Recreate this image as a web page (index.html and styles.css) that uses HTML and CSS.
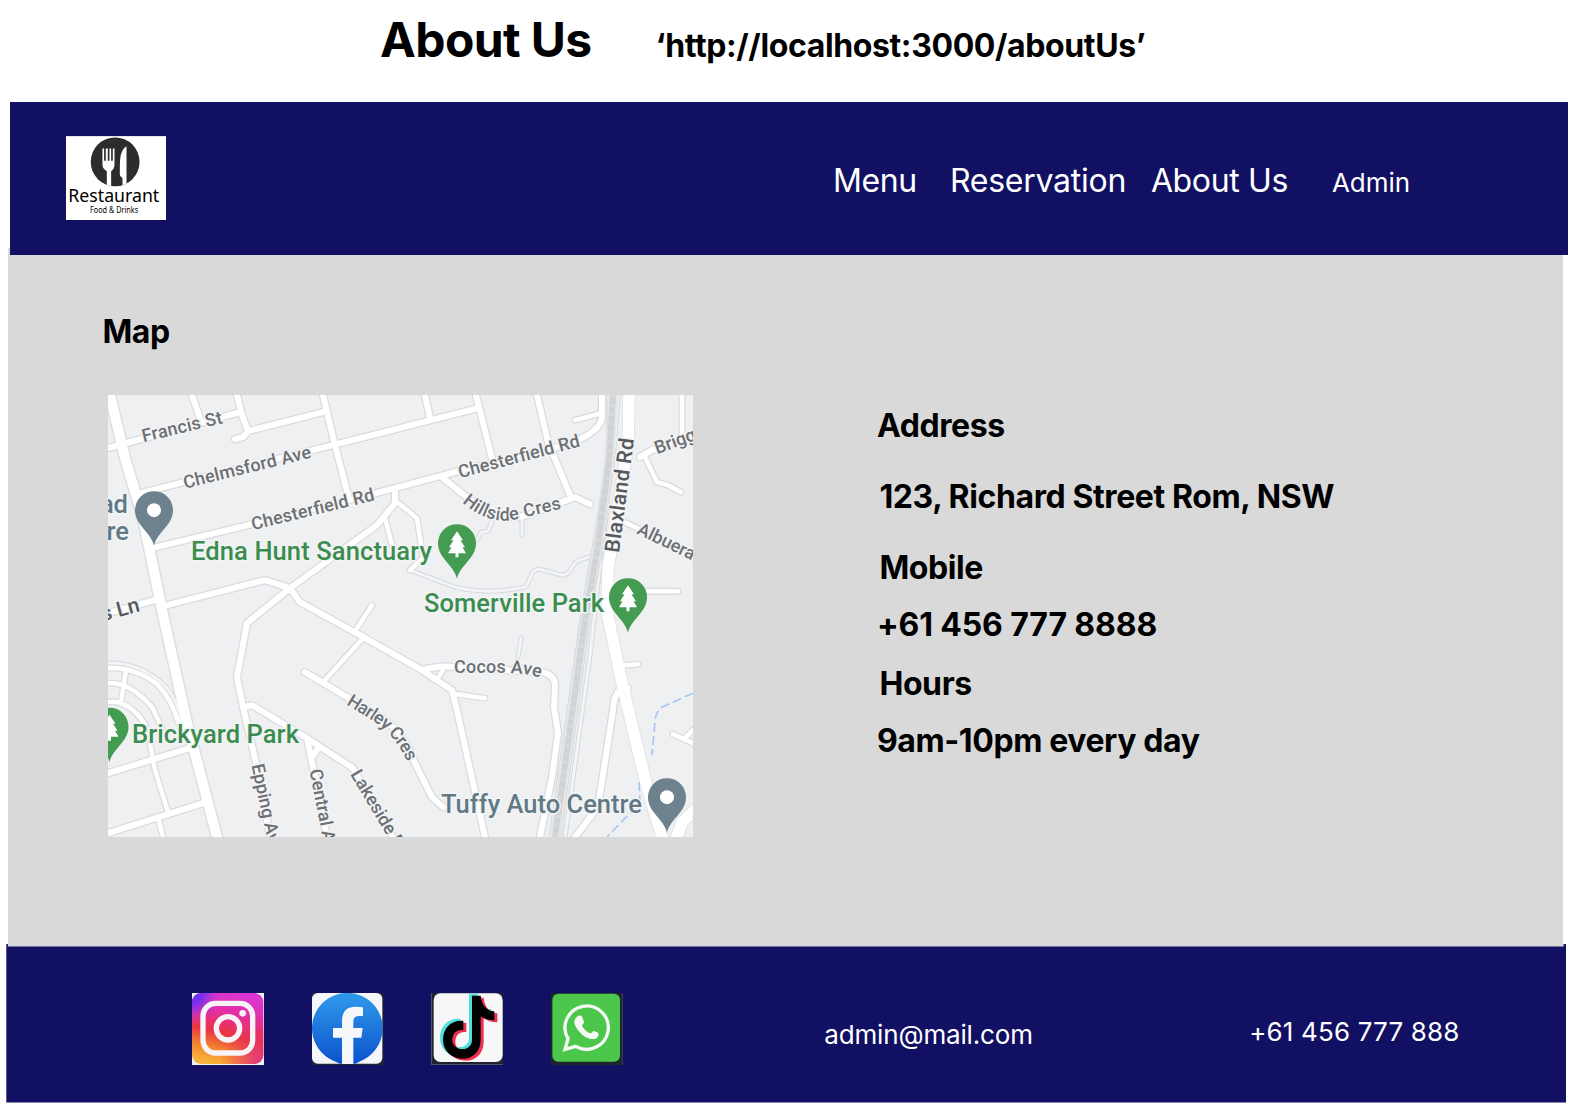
FILE: index.html
```html
<!DOCTYPE html>
<html lang="en">
<head>
<meta charset="utf-8">
<title>About Us</title>
<link rel="stylesheet" href="styles.css">
</head>
<body>
<div class="caption">
  <h1 class="caption-title">About Us</h1>
  <p class="caption-url">‘http://localhost:3000/aboutUs’</p>
</div>

<header class="site-header">
  <svg class="logo" viewBox="0 0 300 252" role="img" aria-label="Restaurant">
    <rect width="300" height="252" fill="#fff"/>
    <clipPath id="plate"><circle cx="147" cy="77" r="73"/></clipPath>
    <circle cx="147" cy="77" r="73" fill="#2c2c2c"/>
    <g fill="#fff" clip-path="url(#plate)">
      <path d="M109 37h5v37h5V37h6v37h5V37h5v37h5V37h5v48c0 11-4 15-10 20v50h-13v-50c-7-5-13-9-13-20z"/>
      <path d="M181 30v125h-12v-30c-5-3-9-7-8-15 1-35-3-65 20-80z"/>
    </g>
    <text class="logo-name" x="7" y="198" textLength="272" lengthAdjust="spacingAndGlyphs">Restaurant</text>
    <text class="logo-tag" x="72" y="231" textLength="144" lengthAdjust="spacingAndGlyphs">Food &amp; Drinks</text>
  </svg>
  <nav class="nav">
    <a class="nav-menu">Menu</a>
    <a class="nav-reservation">Reservation</a>
    <a class="nav-about">About Us</a>
    <a class="nav-admin">Admin</a>
  </nav>
</header>

<main class="content">
  <section class="map-section">
    <h2 class="line">Map</h2>
    <svg class="map" viewBox="108 395 585 442" role="img" aria-label="Street map">
      <defs>
        <g id="trails">
          <path d="M410 570L455 587Q488 595 525 587C531 582 530 569 539 569L562 575C572 576 571 560 582 559L597 555"/>
          <path d="M492 522L488 531 481 532 477 540M522 515V535M521 638L518 657"/>
          <path d="M108 663Q136 662 160 681Q178 697 181 722"/>
          <path d="M607 510L601 555 590 655 565 837"/>
        </g>
        <g id="lanes">
          <path d="M395 500L417 518 423 558 410 570M385 518L392 545"/>
          <path d="M108 668Q135 667 157 684Q172 699 178 722M108 683Q130 682 152 707L162 728M108 702Q128 699 145 724M126 670L121 702"/>
          <path d="M150 743L155 770 168 812M158 817L163 837"/>
          <path d="M372 605L357 628M363 638L323 682M457 694L485 698M443 670L438 678"/>
          <path d="M645 457L657 482 668 485 681 492M682 395V440M625 665L638 664M648 591H678M673 734L693 743M685 738L693 730"/>
          <path d="M625 522L645 532 693 558M575 420L602 413"/>
        </g>
        <g id="streets">
          <path d="M108 448L240 412M192 395L200 418M237 395L242 415 248 431 243 437 235 439M248 431L323 412"/>
          <path d="M137 494L180 483 333 445 478 408M323 395L333 437 348 495M425 395L430 418M476 395L493 462"/>
          <path d="M152 548L240 527 380 492 455 472 565 445Q603 432 602 415V395M537 395L548 442 570 495"/>
          <path d="M443 478L468 498Q500 524 530 514L575 497 590 504"/>
          <path d="M395 488V503L377 525 290 588 247 623 237 677 243 707 257 767 270 837"/>
          <path d="M167 605L265 580 290 588 300 602 360 635 422 670 452 690 457 710 485 837M108 613L155 600"/>
          <path d="M305 672L347 697 385 720Q405 735 415 763L432 797 443 807"/>
          <path d="M422 670Q440 665 455 667L542 672Q556 675 555 687L554 707 558 733 552 777 540 837"/>
          <path d="M108 773L193 747M108 833L203 803"/>
          <path d="M243 707L252 705 307 738 353 768 393 837M307 738L313 767 327 837M319 747L311 758"/>
          <path d="M628 688Q614 687 613 710L598 807 575 837M640 457L652 450 693 435"/>
        </g>
      </defs>
      <rect x="108" y="395" width="585" height="442" fill="#eff0f2"/>
      <use href="#trails" class="road c-trail"/>
      <use href="#lanes" class="road c-lane"/>
      <use href="#streets" class="road c-street"/>
      <path class="road c-main" d="M110 395L125 458 143 518 162 610 187 723 217 837"/>
      <path class="road c-main" d="M629 395L628 445 608 568 607 612 622 683 647 787 662 837M675 842L682 822 695 810"/>
      <use href="#trails" class="road f-trail"/>
      <use href="#lanes" class="road f-lane"/>
      <use href="#streets" class="road f-street"/>
      <path class="rail-bed" d="M613 395L609 460 598 545 585 620 555 837"/>
      <path class="rail" d="M613 395L609 460 598 545 585 620 555 837"/>
      <path class="rail-ties" d="M613 395L609 460 598 545 585 620 555 837"/>
      <path class="rail-side" d="M607 395V430M620 395L616 450 603 545 590 620 561 837M604 480L582 605 549 837"/>
      <path class="road f-main" d="M110 395L125 458 143 518 162 610 187 723 217 837"/>
      <path class="road f-main wide" d="M629 395L628 445 608 568 607 612 622 683 647 787 662 837M675 842L682 822 695 810"/>
      <path class="creek" d="M693 693L662 707Q655 712 655 722L652 755M639 782L640 803Q634 812 626 817L607 837"/>

      <g class="label">
        <text transform="translate(143.500 442) rotate(-13.500)" textLength="82">Francis St</text>
        <text transform="translate(185 488.500) rotate(-13.800)" textLength="131">Chelmsford Ave</text>
        <text transform="translate(253 530) rotate(-13.800)" textLength="126">Chesterfield Rd</text>
        <text transform="translate(460 478) rotate(-14.800)" textLength="125">Chesterfield Rd</text>
        <path id="p-hill" fill="none" d="M462 502Q489 526 517 519L568 507"/>
        <text><textPath href="#p-hill" textLength="106">Hillside Cres</textPath></text>
        <text transform="translate(657 454) rotate(-20)">Briggs</text>
        <text transform="translate(636 533) rotate(26)">Albuera</text>
        <path id="p-cocos" fill="none" d="M454 673H510Q526 673 545 679"/>
        <text><textPath href="#p-cocos" textLength="87">Cocos Ave</textPath></text>
        <path id="p-harley" fill="none" d="M346 704L372 720Q397 735 410 768"/>
        <text><textPath href="#p-harley" textLength="86">Harley Cres</textPath></text>
        <text transform="translate(251.500 765) rotate(78)">Epping Ave</text>
        <text transform="translate(309.500 770) rotate(79)">Central Ave</text>
        <text transform="translate(350 774) rotate(59)">Lakeside Dr</text>
        <text class="major" transform="translate(619 553) rotate(-82.500)" textLength="115">Blaxland Rd</text>
        <text class="major" transform="translate(103 621) rotate(-15)">s Ln</text>
      </g>
      <g class="place park">
        <text x="191" y="560" textLength="241">Edna Hunt Sanctuary</text>
        <text x="424" y="612" textLength="180">Somerville Park</text>
        <text x="132" y="743" textLength="167">Brickyard Park</text>
      </g>
      <g class="place shop">
        <text x="441" y="812.500" textLength="201">Tuffy Auto Centre</text>
        <text x="128" y="513" text-anchor="end">ad</text>
        <text x="129" y="539.500" text-anchor="end">re</text>
      </g>
      <defs>
        <path id="pin" d="M0 35.500C-3 22-19 15-19 0A19 19 0 0 1 19 0C19 15 3 22 0 35.500Z"/>
        <path id="tree" fill="#fff" d="M0-12L6-3H3.500L8 4H5.500L9 10H1.500V14H-1.500V10H-9L-5.500 4H-8L-3.500-3H-6Z"/>
      </defs>
      <g transform="translate(154 510)"><use href="#pin" fill="#6d828e"/><circle r="7" fill="#fff"/></g>
      <g transform="translate(667 797)"><use href="#pin" fill="#6d828e"/><circle r="7" fill="#fff"/></g>
      <g transform="translate(457 543)"><use href="#pin" fill="#449b52"/><use href="#tree"/></g>
      <g transform="translate(628 597)"><use href="#pin" fill="#449b52"/><use href="#tree"/></g>
      <g transform="translate(109.500 726.500)"><use href="#pin" fill="#449b52"/><use href="#tree"/></g>
    </svg>
  </section>
  <section class="info">
    <h2 class="line address">Address</h2>
    <p class="line street indent">123, Richard Street Rom, NSW</p>
    <h2 class="line mobile indent">Mobile</h2>
    <p class="line phone">+61 456 777 8888</p>
    <h2 class="line hours indent">Hours</h2>
    <p class="line open">9am-10pm every day</p>
  </section>
</main>

<footer class="site-footer">
  <div class="social">
    <svg viewBox="0 0 216 216" role="img" aria-label="Instagram">
      <defs>
        <linearGradient id="ig" x1=".35" y1="1" x2=".6" y2="0">
          <stop offset="0" stop-color="#f6b23a"/><stop offset=".2" stop-color="#f3862f"/><stop offset=".42" stop-color="#ea3440"/><stop offset=".72" stop-color="#e42fa0"/><stop offset="1" stop-color="#d936d4"/>
        </linearGradient>
        <radialGradient id="ig-blue" cx="0" cy="0" r=".45"><stop offset="0" stop-color="#5a2cf0"/><stop offset=".35" stop-color="#7a30ee"/><stop offset="1" stop-color="#d936d4" stop-opacity="0"/></radialGradient>
        <radialGradient id="ig-pink" cx="1" cy="1" r=".6"><stop offset="0" stop-color="#e02a90"/><stop offset="1" stop-color="#e82c60" stop-opacity="0"/></radialGradient>
      </defs>
      <rect width="216" height="216" fill="#f1eff6"/>
      <rect width="214" height="213" rx="27" fill="url(#ig)"/>
      <rect width="214" height="213" rx="27" fill="url(#ig-blue)"/>
      <rect width="214" height="213" rx="27" fill="url(#ig-pink)"/>
      <g fill="none" stroke="#f7f3f7" stroke-width="16"><rect x="33" y="31" width="149" height="149" rx="38"/><circle cx="108" cy="106" r="35"/></g>
      <circle cx="152" cy="61" r="10" fill="#f7f3f7"/>
    </svg>
    <svg viewBox="0 0 216 216" role="img" aria-label="Facebook">
      <defs><linearGradient id="fb" x2="0" y2="1"><stop stop-color="#309aea"/><stop offset="1" stop-color="#0c53cd"/></linearGradient></defs>
      <rect width="214" height="216" fill="#1f2430"/>
      <rect width="211" height="212" rx="17" fill="#f4f6f9"/>
      <path fill="url(#fb)" d="M64 203A106 106 0 1 1 148 203L130 212H84Z"/>
      <path fill="#f5f7fa" d="M90 213V134H63V105H90V84Q90 41 131 41Q143 41 153 43V69H140Q124 69 124 86V105H152L148 134H124V213Z"/>
    </svg>
    <svg viewBox="0 0 216 216" role="img" aria-label="TikTok">
      <defs><path id="note" d="M123 8H149C151 36 168 54 190 55V82C175 82 160 78 149 70V140C149 175 125 197 95 197C60 197 36 172 36 140C36 105 63 80 97 84V112C80 108 64 120 64 140C64 158 78 168 94 168C112 168 123 156 123 140Z"/></defs>
      <rect width="216" height="216" fill="#20242e"/>
      <path d="M1 0V215H216" fill="none" stroke="#5a5c72" stroke-width="3"/>
      <rect x="8" y="1" width="207" height="206" rx="20" fill="#f7f7f8"/>
      <use href="#note" x="-9" y="-6" fill="#4fe0dc"/><use href="#note" x="9" y="6" fill="#ee2f4e"/><use href="#note" fill="#000"/>
    </svg>
    <svg viewBox="0 0 216 216" role="img" aria-label="WhatsApp">
      <rect width="216" height="216" fill="#1d242b"/>
      <path d="M214 0V216" stroke="#3e405c" stroke-width="3"/>
      <rect x="4" y="2" width="203" height="204" rx="18" fill="#4cc74b"/>
      <path fill="none" stroke="#f6faf6" stroke-width="10" stroke-linejoin="miter" d="M42 169L51 137A65 65 0 1 1 74 160Z"/>
      <path fill="#f6faf6" d="M80 70C83 67 91 67 93 71L99 86C100 90 93 95 93 98C98 108 106 116 118 121C121 122 126 113 130 114L142 120C144 126 141 134 134 137C124 141 107 136 94 125C81 114 72 100 70 89C69 81 74 74 80 70Z"/>
    </svg>
  </div>
  <span class="footer-mail">admin@mail.com</span>
  <span class="footer-phone">+61 456 777 888</span>
</footer>
</body>
</html>
```

FILE: styles.css
```css
* { box-sizing: border-box; }
body { margin: 0; background: #fff; color: #000; font-family: Inter, "Liberation Sans", sans-serif; height: 1104px; overflow: hidden; }
h1, h2, p { margin: 0; font-weight: 700; white-space: nowrap; }

.caption { display: flex; align-items: baseline; height: 101.5px; padding: 10.5px 0 0 380px; }
.caption-title { font-size: 48px; line-height: 58px; letter-spacing: -0.6px; }
.caption-url { font-size: 32px; line-height: 40px; margin-left: 64px; letter-spacing: -0.38px; }

.site-header { position: relative; z-index: 1; display: flex; align-items: flex-start; width: 1557.3px; height: 153.5px; margin-left: 10.4px; padding-left: 55.2px; background: #121062; color: #fff; }
.logo { display: block; width: 100.3px; height: 84.5px; margin-top: 34px; }
.logo-name { font: 53px "Noto Sans", sans-serif; }
.logo-tag { font: 24px "Noto Sans", sans-serif; }
.nav { display: flex; align-items: baseline; margin: 59px 0 0 667px; font-size: 32px; line-height: 40px; font-weight: 400; white-space: nowrap; }
.nav-menu { width: 117px; letter-spacing: -0.4px; }
.nav-reservation { width: 201px; letter-spacing: -0.25px; }
.nav-about { width: 181px; letter-spacing: -0.35px; }
.nav-admin { font-size: 26px; }

.content { display: flex; width: 1555.6px; height: 698.5px; margin: -7px 0 0 7.9px; background: #d9d9d9; }
.map-section { padding: 63.5px 0 0 94.5px; width: 869px; }
.line { font-size: 32px; line-height: 40px; letter-spacing: -0.4px; }
.map { display: block; width: 585px; height: 442.3px; margin: 43.5px 0 0 5.5px; }
.info { padding-top: 158px; }
.indent { margin-left: 2.5px; }
.street { margin-top: 31px; }
.mobile { margin-top: 31px; }
.phone { margin-top: 17px; letter-spacing: -0.13px; }
.hours { margin-top: 19px; }
.open { margin-top: 17px; }

.road { fill: none; stroke-linecap: round; stroke-linejoin: round; }
.c-trail { stroke: #d6d9dc; stroke-width: 5; }
.c-lane { stroke: #d9dbdf; stroke-width: 7; }
.c-street { stroke: #d9dbdf; stroke-width: 8.5; }
.c-main { stroke: #dcdee1; stroke-width: 13; }
.f-trail { stroke: #f3f4f5; stroke-width: 3; }
.f-lane { stroke: #fff; stroke-width: 4.5; }
.f-street { stroke: #fff; stroke-width: 6; }
.f-main { stroke: #fff; stroke-width: 10; }
.f-main.wide { stroke-width: 11.5; }
.rail-bed { fill: none; stroke: #e4e6e8; stroke-width: 10; }
.rail { fill: none; stroke: #d0d3d6; stroke-width: 6; }
.rail-ties { fill: none; stroke: #d6d9dc; stroke-width: 5; stroke-dasharray: 3 6; }
.rail-side { fill: none; stroke: #d6d9dc; stroke-width: 1; }
.creek { fill: none; stroke: #a5c4f4; stroke-width: 1.6; stroke-dasharray: 9 4; }
.label { font: 500 18px Roboto, sans-serif; fill: #6c6f73; }
.label text, .place text { stroke: #f3f4f5; stroke-width: 3px; stroke-linejoin: round; paint-order: stroke; }
.label .major { font-size: 21px; fill: #55585c; }
.place { font: 500 25.5px Roboto, sans-serif; }
.park { fill: #3b8d4f; }
.shop { fill: #607985; }

.site-footer { position: relative; display: flex; align-items: flex-start; width: 1559.7px; height: 158.5px; margin: -2.5px 0 0 6.3px; padding-left: 185.7px; background: #121062; color: #fff; font-size: 26px; line-height: 32px; font-weight: 400; white-space: nowrap; clip-path: polygon(0 0, 1.6px 0, 1.6px 2.5px, 1557.2px 2.5px, 1557.2px 0, 100% 0, 100% 100%, 0 100%); }
.social { display: flex; gap: 47.7px; margin-top: 49px; }
.social svg { display: block; width: 72px; height: 72px; }
.footer-mail { width: 425px; margin: 75px 0 0 201.2px; letter-spacing: -0.15px; }
.footer-phone { margin-top: 72px; letter-spacing: 0.15px; }
```
